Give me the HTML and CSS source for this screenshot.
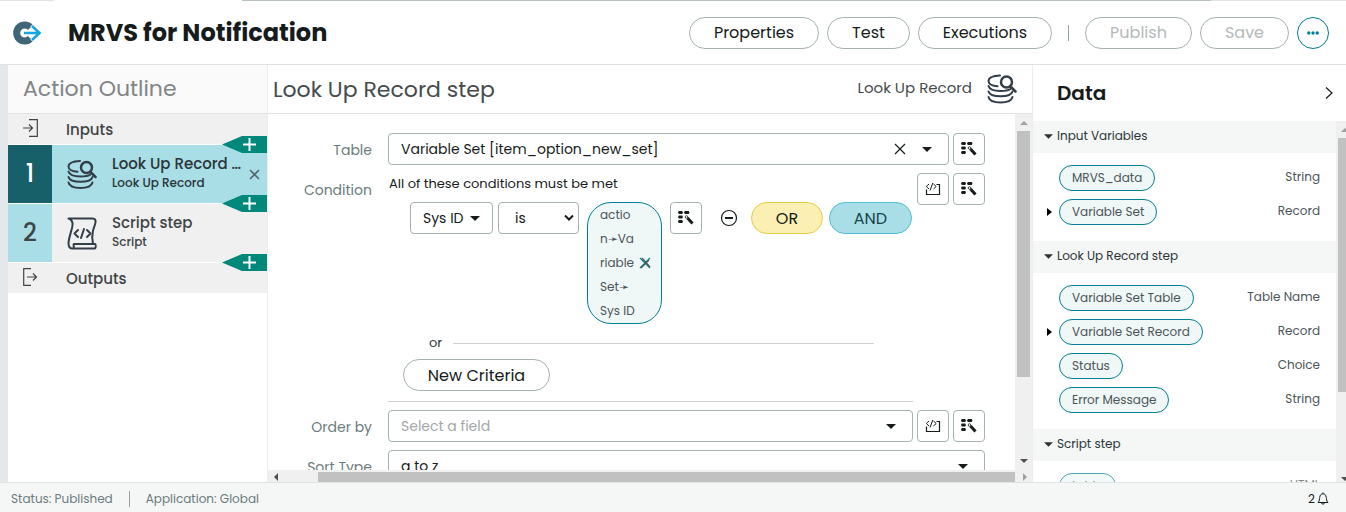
FILE: index.html
```html
<!DOCTYPE html>
<html lang="en">
<head>
<meta charset="utf-8">
<meta name="viewport" content="width=device-width, initial-scale=1">
<title>MRVS for Notification</title>
<link rel="stylesheet" href="styles.css">
</head>
<body>
<svg class="defs" aria-hidden="true">
  <symbol id="i-lookup" viewBox="0 0 30 30">
    <g fill="none" stroke="currentColor" stroke-width="2" stroke-linecap="round">
      <path d="M13 1.500C6 1.800 1.500 4 1.500 7c0 3 4 5 9 5.300"/>
      <path d="M1.500 12c1 3.500 6 5 12 5s8-.6 10-2"/>
      <path d="M1.500 17.500c1 3.500 6 4.800 12 4.800s11-1.300 12-4.800"/>
      <path d="M1.500 23c1 4 6 5.500 12 5.500s11-1.500 12-5.500"/>
      <circle cx="19.500" cy="8" r="5.500" stroke-width="2.500"/>
      <path d="M23.500 12.500l5 5" stroke-width="2.500"/>
    </g>
  </symbol>
  <symbol id="i-script" viewBox="0 0 30 33">
    <g fill="none" stroke="currentColor" stroke-width="2" stroke-linejoin="round" stroke-linecap="round">
      <path d="M1.500 1.500h24c3.500 0 3.500 3 2.500 6l-2 6c-1 4-1 9 0 13.500M1.500 1.500c3 1 4.500 3 4 7s-4 13-4 18c0 3 1 5 4 5h22c1.500 0 1.500-4.500.5-4.500H7c-1.200 0 1 4.500-1.500 4.500"/>
      <path d="M11 13l-3.500 3.500 3.500 3.500M20 13l3.500 3.500L20 20M17 12l-3 9"/>
    </g>
  </symbol>
  <symbol id="i-wand" viewBox="0 0 16 14">
    <path d="M.8 0h3.400l.8 1.500-.8 1.500H.8L0 1.500zM6.800 0h3.900l.8 1.500-.8 1.500H6.800L6 1.500zM.8 4.500h3.400l.8 1.500-.8 1.500H.8L0 6zM.8 9h3.400l.8 1.500-.8 1.500H.8L0 10.500z" fill="currentColor"/>
    <path d="M9.500 7l5 5.500" stroke="currentColor" stroke-width="3"/>
    <circle cx="8.500" cy="6" r="1.300" fill="#fff" stroke="currentColor" stroke-width=".8"/>
  </symbol>
  <symbol id="i-code" viewBox="0 0 16 14">
    <path d="M1.500 7.500v5h13V2.500h-3" fill="none" stroke="currentColor" stroke-width="1.200"/>
    <path d="M4 2L1.300 4.500 4 7M8.500 2l2.700 2.500L8.500 7M7.800 1L5 8.500" fill="none" stroke="currentColor"/>
  </symbol>
  <symbol id="i-x" viewBox="0 0 12 12">
    <path d="M1 1l10 10M11 1L1 11" fill="none" stroke="currentColor" stroke-width="1.200"/>
  </symbol>
  <symbol id="i-down" viewBox="0 0 10 5"><path d="M0 0h10L5 5z" fill="currentColor"/></symbol>
  <symbol id="i-right" viewBox="0 0 5 8"><path d="M0 0l5 4-5 4z" fill="currentColor"/></symbol>
</svg>

<header class="topbar">
  <svg class="logo" viewBox="0 0 30 24" aria-hidden="true">
    <path d="M18.500 6.500A8 8 0 1 0 18.500 17.500" fill="none" stroke="#3f6577" stroke-width="7"/>
    <path d="M11 12h17M20 4l8 8-8 8" fill="none" stroke="#fff" stroke-width="5"/>
    <path d="M12 12h16M20 5l7.500 7-7.500 7" fill="none" stroke="#12a5e0" stroke-width="2.500"/>
  </svg>
  <h1 class="title">MRVS for Notification</h1>
  <nav class="actions" aria-label="Action commands">
    <button class="btn btn-properties">Properties</button>
    <button class="btn btn-test">Test</button>
    <button class="btn btn-executions">Executions</button>
    <span class="bar"></span>
    <button class="btn btn-publish" disabled>Publish</button>
    <button class="btn btn-save" disabled>Save</button>
    <button class="more" aria-label="More actions">
      <svg width="12" height="4" viewBox="0 0 12 4"><g fill="currentColor"><circle cx="1.800" cy="2" r="1.700"/><circle cx="6" cy="2" r="1.700"/><circle cx="10.200" cy="2" r="1.700"/></g></svg>
    </button>
  </nav>
</header>

<main class="workspace">
  <aside class="outline">
    <h2 class="outline-head">Action Outline</h2>
    <div class="io">
      <svg class="io-icon" viewBox="0 0 16 18"><path d="M6 .7h8.300v16.600H6M0 9h9M6 5.500L9.500 9 6 12.500" fill="none" stroke="currentColor" stroke-width="1.200"/></svg>
      <span>Inputs</span>
      <button class="add" aria-label="Add step"><svg width="13" height="13" viewBox="0 0 13 13"><path d="M6.500 0v13M0 6.500h13" stroke="#fff" stroke-width="2"/></svg></button>
    </div>
    <div class="step step-on">
      <span class="num">1</span>
      <svg class="step-icon"><use href="#i-lookup"/></svg>
      <div class="step-text"><strong>Look Up Record step</strong><small>Look Up Record</small></div>
      <button class="step-x" aria-label="Remove step"><svg width="11" height="11" viewBox="0 0 11 11"><path d="M1 1l9 9M10 1l-9 9" stroke="currentColor" stroke-width="1.600"/></svg></button>
      <button class="add" aria-label="Add step"><svg width="13" height="13" viewBox="0 0 13 13"><path d="M6.500 0v13M0 6.500h13" stroke="#fff" stroke-width="2"/></svg></button>
    </div>
    <div class="step">
      <span class="num">2</span>
      <svg class="step-icon"><use href="#i-script"/></svg>
      <div class="step-text"><strong>Script step</strong><small>Script</small></div>
      <button class="add" aria-label="Add step"><svg width="13" height="13" viewBox="0 0 13 13"><path d="M6.500 0v13M0 6.500h13" stroke="#fff" stroke-width="2"/></svg></button>
    </div>
    <div class="io">
      <svg class="io-icon" viewBox="0 0 16 18"><path d="M8 .7H.7v16.600H8M4 9h9M10 5.500L13.500 9 10 12.500" fill="none" stroke="currentColor" stroke-width="1.200"/></svg>
      <span>Outputs</span>
    </div>
  </aside>

  <section class="editor">
    <div class="editor-head">
      <h2>Look Up Record step</h2>
      <span class="kind">Look Up Record</span>
      <svg class="kind-icon"><use href="#i-lookup"/></svg>
    </div>
    <div class="editor-body">
      <form class="form">
        <div class="row">
          <label class="lbl" for="table">Table</label>
          <div class="box">
            <input id="table" type="text" value="Variable Set [item_option_new_set]">
            <button type="button" class="plain" aria-label="Clear"><svg width="12" height="12"><use href="#i-x"/></svg></button>
            <button type="button" class="plain" aria-label="Open list"><svg width="10" height="5"><use href="#i-down"/></svg></button>
          </div>
          <button type="button" class="sq" aria-label="Data transforms"><svg class="sq-icon"><use href="#i-wand"/></svg></button>
        </div>

        <div class="row row-cond">
          <span class="lbl" id="cond-label">Condition</span>
          <div class="cond" role="group" aria-labelledby="cond-label">
            <p class="cond-head">All of these conditions must be met</p>
            <div class="cond-line">
              <div class="pick pick-field">
                <select aria-label="Field"><option>Sys ID</option></select>
                <svg width="10" height="5"><use href="#i-down"/></svg>
              </div>
              <div class="pick pick-op">
                <select aria-label="Operator"><option>is</option></select>
                <svg width="10" height="6" viewBox="0 0 10 6"><path d="M1 .5l4 4 4-4" fill="none" stroke="currentColor" stroke-width="2"/></svg>
              </div>
              <div class="value">
                <span>actio<br>n➛Va<br>riable<br>Set➛<br>Sys ID</span>
                <button type="button" class="plain" aria-label="Remove value"><svg width="12" height="12" viewBox="0 0 12 12"><path d="M1 1l10 10M11 1L1 11" stroke="#008094" stroke-width="1.200"/><path d="M3 1l8 9M10 3l-8 8" stroke="#4a5558" stroke-width="1.200"/></svg></button>
              </div>
              <button type="button" class="sq" aria-label="Data transforms"><svg class="sq-icon"><use href="#i-wand"/></svg></button>
              <button type="button" class="plain minus" aria-label="Delete condition"><svg width="18" height="18" viewBox="0 0 18 18"><circle cx="9" cy="9" r="7.500" fill="none" stroke="currentColor" stroke-width="1.200"/><path d="M5 9h8" stroke="currentColor" stroke-width="2"/></svg></button>
              <button type="button" class="btn btn-or">OR</button>
              <button type="button" class="btn btn-and">AND</button>
            </div>
            <div class="or-line"><span>or</span><i></i></div>
            <button type="button" class="btn btn-new">New Criteria</button>
          </div>
          <button type="button" class="sq" aria-label="Edit as script"><svg class="sq-icon"><use href="#i-code"/></svg></button>
          <button type="button" class="sq" aria-label="Data transforms"><svg class="sq-icon"><use href="#i-wand"/></svg></button>
        </div>

        <div class="row">
          <label class="lbl" for="order">Order by</label>
          <div class="box">
            <input id="order" type="text" placeholder="Select a field">
            <button type="button" class="plain" aria-label="Open list"><svg width="10" height="5"><use href="#i-down"/></svg></button>
          </div>
          <button type="button" class="sq" aria-label="Edit as script"><svg class="sq-icon"><use href="#i-code"/></svg></button>
          <button type="button" class="sq" aria-label="Data transforms"><svg class="sq-icon"><use href="#i-wand"/></svg></button>
        </div>

        <div class="row">
          <label class="lbl" for="sort">Sort Type</label>
          <div class="pick pick-sort">
            <select id="sort"><option>a to z</option></select>
            <svg width="10" height="5"><use href="#i-down"/></svg>
          </div>
        </div>
      </form>
      <div class="vbar" aria-hidden="true">
        <svg width="8" height="4" viewBox="0 0 8 4"><path d="M0 4h8L4 0z" fill="#a0a0a0"/></svg>
        <i class="vthumb"></i>
        <svg class="end" width="8" height="4" viewBox="0 0 8 4"><path d="M0 0h8L4 4z" fill="#505050"/></svg>
      </div>
    </div>
    <div class="hbar" aria-hidden="true">
      <svg width="4" height="8" viewBox="0 0 4 8"><path d="M4 0v8L0 4z" fill="#505050"/></svg>
      <i class="hthumb"></i>
      <svg width="4" height="8" viewBox="0 0 4 8"><path d="M0 0v8l4-4z" fill="#a0a0a0"/></svg>
    </div>
  </section>

  <aside class="data">
    <div class="data-head">
      <h2>Data</h2>
      <button class="plain" aria-label="Collapse panel"><svg width="8" height="12" viewBox="0 0 8 12"><path d="M1 .5L7 6l-6 5.500" fill="none" stroke="currentColor" stroke-width="1.200"/></svg></button>
    </div>
    <div class="data-body">
      <div class="groups">
        <h3><svg width="9" height="5"><use href="#i-down"/></svg>Input Variables</h3>
        <ul>
          <li><span class="tag">MRVS_data</span><em>String</em></li>
          <li><svg class="tw"><use href="#i-right"/></svg><span class="tag">Variable Set</span><em>Record</em></li>
        </ul>
        <h3><svg width="9" height="5"><use href="#i-down"/></svg>Look Up Record step</h3>
        <ul>
          <li><span class="tag">Variable Set Table</span><em>Table Name</em></li>
          <li><svg class="tw"><use href="#i-right"/></svg><span class="tag">Variable Set Record</span><em>Record</em></li>
          <li><span class="tag">Status</span><em>Choice</em></li>
          <li><span class="tag">Error Message</span><em>String</em></li>
        </ul>
        <h3><svg width="9" height="5"><use href="#i-down"/></svg>Script step</h3>
        <ul>
          <li class="faded"><span class="tag">table</span><em>HTML</em></li>
        </ul>
      </div>
      <div class="dbar" aria-hidden="true">
        <svg width="8" height="4" viewBox="0 0 8 4"><path d="M0 4h8L4 0z" fill="#a0a0a0"/></svg>
        <i class="dthumb"></i>
        <svg class="end" width="8" height="4" viewBox="0 0 8 4"><path d="M0 0h8L4 4z" fill="#505050"/></svg>
      </div>
    </div>
  </aside>
</main>

<footer class="status">
  <span>Status: Published</span>
  <span class="bar"></span>
  <span>Application: Global</span>
  <button class="bell" aria-label="2 notifications">2<svg width="12" height="13" viewBox="0 0 12 13"><path d="M6 .5v1M1 10.500C2.500 9 2.500 7 2.700 5.500 3 3 4.200 1.800 6 1.800S9 3 9.300 5.500c.2 1.500.2 3.500 1.700 5zM4.500 11c.3 1.500 2.700 1.500 3 0" fill="none" stroke="currentColor"/></svg></button>
</footer>
</body>
</html>
```

FILE: styles.css
```css
* { box-sizing: border-box; }
html, body { height: 100%; }
body {
  margin: 0;
  display: flex;
  flex-direction: column;
  overflow: hidden;
  background: #fff;
  color: #2b3437;
  font-family: Poppins, Inter, "Open Sans", sans-serif;
  font-size: 14px;
}
h1, h2, h3, p, ul { margin: 0; padding: 0; font-weight: 400; }
ul { list-style: none; }
button, input, select { font: inherit; color: inherit; margin: 0; }
svg { display: block; flex: none; }
.defs { position: absolute; width: 0; height: 0; }

/* Top bar */
.topbar {
  flex: none;
  display: flex;
  align-items: center;
  height: 65px;
  padding: 1px 17px 0 12px;
  border-bottom: 1px solid #dde3e3;
  background: linear-gradient(90deg, #e0e4e4 0 4%, #fff 4% 18%, #b8c0c0 18% 90%, #e0e4e4 90%) top / 100% 1px no-repeat;
}
.logo { width: 30px; height: 24px; }
.title { margin-left: 26px; font-size: 24px; font-weight: 700; color: #161b1c; white-space: nowrap; }
.actions { display: flex; align-items: center; gap: 8px; margin-left: auto; }
.btn {
  height: 32px;
  padding: 0;
  border: 1px solid #a5b2b2;
  border-radius: 16px;
  background: #fff;
  color: #161b1c;
  font-size: 16px;
}
.btn:disabled { color: #b4b9b9; }
.btn-properties { width: 130px; }
.btn-test { width: 83px; }
.btn-executions { width: 134px; }
.btn-publish { width: 107px; }
.btn-save { width: 89px; }
.bar { width: 1px; height: 16px; background: #93a1a1; }
.actions .bar { margin: 0 8px; }
.more {
  display: grid;
  place-items: center;
  width: 32px;
  height: 32px;
  padding: 0;
  border: 1px solid #008094;
  border-radius: 50%;
  background: #fff;
  color: #008094;
}

.workspace { flex: 1; min-height: 0; display: flex; border-left: 8px solid #e4e8ea; }

/* Outline */
.outline { flex: none; width: 260px; border-right: 1px solid #eceeee; }
.outline-head {
  height: 49px;
  padding-left: 15px;
  border-bottom: 1px solid #e0e3e3;
  background: #fafafa;
  color: #808586;
  font-size: 22px;
  line-height: 48px;
}
.io, .step { position: relative; display: flex; align-items: center; background: #f0f0f0; color: #3f4547; }
.io { height: 30px; font-size: 15px; font-weight: 500; }
.io-icon { width: 16px; height: 18px; margin: 0 27px 2px 15px; }
.step { height: 58px; margin-top: 1px; }
.step + .io { margin-top: 1px; }
.num {
  flex: none;
  width: 44px;
  height: 58px;
  background: #a9dee6;
  font-size: 24px;
  font-weight: 500;
  line-height: 58px;
  text-align: center;
}
.step-on { background: #a9dee6; color: #2b3437; }
.step-on .num { background: #17606a; color: #fff; }
.step-icon { width: 30px; height: 33px; margin: 0 15px; color: #333e48; }
.step-text { width: 130px; margin-bottom: 2px; }
.step-text strong, .step-text small { display: block; white-space: nowrap; }
.step-text strong { overflow: hidden; text-overflow: ellipsis; font-size: 15px; font-weight: 500; line-height: 20px; }
.step-text small { font-size: 12px; font-weight: 500; line-height: 18px; }
.plain, .step-x { padding: 0; border: 0; background: none; }
.step-x { margin-left: 7px; color: #56666b; }
.add {
  position: absolute;
  z-index: 1;
  right: 0;
  bottom: -9px;
  display: flex;
  align-items: center;
  width: 45px;
  height: 17px;
  padding: 0 0 0 21px;
  border: 0;
  background: #00887a;
  clip-path: polygon(20px 0, 100% 0, 100% 100%, 20px 100%, 0 50%);
}

/* Editor */
.editor { flex: 1; min-width: 0; display: flex; flex-direction: column; }
.editor-head {
  flex: none;
  display: flex;
  align-items: center;
  height: 49px;
  padding: 0 15px 0 5px;
  border-bottom: 1px solid #e0e3e3;
  color: #454b4d;
}
.editor-head h2 { font-size: 22px; }
.kind { margin-left: auto; font-size: 15px; line-height: 22px; margin-bottom: 2px; }
.kind-icon { width: 30px; height: 32px; margin-left: 15px; color: #333e48; }
.editor-body { flex: 1; min-height: 0; display: flex; }
.form {
  flex: 1;
  min-width: 0;
  display: flex;
  flex-direction: column;
  gap: 8px;
  overflow: hidden;
  padding: 19px 30px 0 0;
}
.row { flex: none; display: flex; gap: 4px; }
.lbl { flex: none; width: 104px; height: 32px; margin-right: 12px; color: #6b7b7c; line-height: 34px; text-align: right; }
.box, .pick { display: flex; align-items: center; height: 32px; border: 1px solid #a5b2b2; border-radius: 4px; background: #fff; color: #161b1c; }
.box { flex: 1; min-width: 0; gap: 16px; padding: 0 16px 0 12px; }
.box input { flex: 1; min-width: 0; padding: 0; border: 0; outline: 0; background: none; }
.box input::placeholder { color: #a3a8a9; opacity: 1; }
.sq {
  flex: none;
  display: grid;
  place-items: center;
  width: 32px;
  height: 32px;
  padding: 0;
  border: 1px solid #a5b2b2;
  border-radius: 4px;
  background: #fff;
  color: #161b1c;
}
.sq-icon { width: 16px; height: 14px; }
.pick { display: grid; }
.pick select, .pick svg { grid-area: 1 / 1; }
.pick select { width: 100%; height: 30px; padding: 0 12px; border: 0; background: none; appearance: none; }
.pick svg { justify-self: end; margin-right: 12px; pointer-events: none; }
.pick-field { width: 83px; }
.pick-op { width: 81px; margin-left: 5px; }
.pick-op select { padding-left: 16px; }
.pick-op svg { margin-right: 4px; }
.pick-sort { flex: 1; }
.pick-sort svg { margin-right: 16px; }

.cond { flex: 1; min-width: 0; height: 229px; border-bottom: 1px solid #ccd1d1; }
.cond-head { padding-left: 1px; color: #161b1c; font-size: 13px; line-height: 22px; }
.cond-line { display: flex; margin: 7px 0 0 22px; }
.value {
  display: flex;
  align-items: center;
  gap: 4px;
  width: 75px;
  height: 122px;
  margin: 0 8px;
  padding: 0 0 0 12px;
  border: 1px solid #008094;
  border-radius: 24px;
  background: #f0f7f7;
  color: #4a5558;
  font-size: 12px;
  line-height: 24px;
}
.minus { height: 32px; margin: 0 13px 0 18px; color: #161b1c; }
.btn-or { width: 72px; border-color: #e4cf45; background: #fcefb4; }
.btn-and { width: 83px; margin-left: 6px; border-color: #4fc0cf; background: #a9dee6; color: #17454c; }
.or-line { display: flex; align-items: center; gap: 11px; height: 18px; margin: 10px 39px 7px 41px; font-size: 13px; }
.or-line i { flex: 1; height: 1px; background: #ccd1d1; }
.btn-new { width: 147px; margin-left: 15px; }

/* Scroll tracks */
.vbar, .dbar { flex: none; display: flex; flex-direction: column; align-items: center; background: #f0f0f0; }
.vbar { width: 17px; padding: 7px 0 7px; }
.vthumb { width: 13px; height: 72%; margin-top: 6px; background: #c1c1c1; }
.end { margin-top: auto; }
.hbar { flex: none; display: flex; align-items: center; height: 12px; padding: 2px 5px 0 6px; background: #f0f0f0; }
.hthumb { flex: 1; height: 10px; margin: 0 8px 0 40px; background: #c1c1c1; }

/* Data panel */
.data { flex: none; width: 314px; display: flex; flex-direction: column; border-left: 1px solid #eceeee; }
.data-head { flex: none; display: flex; align-items: center; justify-content: space-between; height: 56px; padding: 0 13px 0 24px; color: #161b1c; }
.data-head h2 { font-size: 20px; font-weight: 600; }
.data-body { flex: 1; min-height: 0; display: flex; }
.groups { flex: 1; min-width: 0; overflow: hidden; }
.groups h3 { display: flex; align-items: center; gap: 4px; height: 32px; padding: 0 0 2px 11px; background: #f5f7f7; font-size: 12px; }
.groups ul { display: flex; flex-direction: column; gap: 8px; padding: 12px 16px 16px 26px; }
.groups li { position: relative; display: flex; align-items: center; justify-content: space-between; }
.tag { height: 26px; padding: 0 12px; border: 1px solid #008094; border-radius: 13px; background: #f0f7f7; color: #4a5558; font-size: 12px; line-height: 24px; }
.groups em { color: #4a5558; font-size: 12px; font-style: normal; line-height: 22px; margin-bottom: 2px; }
.tw { position: absolute; left: -12px; width: 5px; height: 8px; color: #000; }
.faded { opacity: .7; }
.dbar { width: 10px; padding: 7px 0 1px; overflow: hidden; align-items: flex-start; }
.dbar svg { margin-left: 5px; }
.dbar .end { margin-top: auto; }
.dthumb { width: 8px; height: 72%; margin: 6px 0 0 2px; background: #c1c1c1; }

/* Status bar */
.status {
  flex: none;
  display: flex;
  align-items: center;
  gap: 16px;
  height: 30px;
  padding: 2px 17px 0 11px;
  border-top: 1px solid #dde3e3;
  background: #f5f7f7;
  color: #6b7b7c;
  font-size: 12px;
}
.bell { display: flex; align-items: center; gap: 2px; margin-left: auto; padding: 0; border: 0; background: none; color: #161b1c; }
```
